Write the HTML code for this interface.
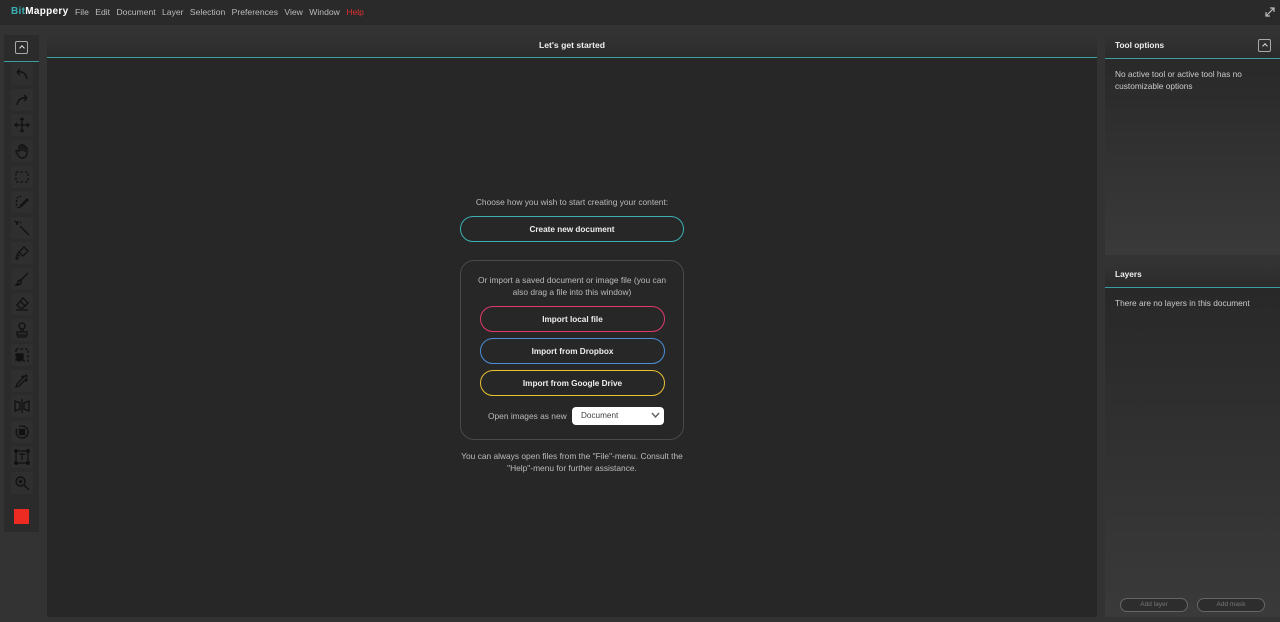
<!DOCTYPE html>
<html><head><meta charset="utf-8"><style>
*{margin:0;padding:0;box-sizing:border-box}
body{width:1280px;height:622px;background:#333;font-family:"Liberation Sans",sans-serif;font-size:8.6px;color:#ccc;position:relative;overflow:hidden}
.top{position:absolute;left:0;top:0;width:1280px;height:25px;background:#2a2a2a}
.logo{position:absolute;left:11px;top:6px;font-weight:bold;font-size:10px;color:#fff;letter-spacing:.3px}
.logo span{color:#3ab0b5}
.menu{position:absolute;left:75px;top:7px;font-size:8.6px;color:#bbb;white-space:nowrap}
.menu b{font-weight:normal;margin-right:6.4px}
.tb{position:absolute;left:4px;top:35px;width:35px;height:497px;background:#2b2b2b}
.tb .hd{height:27px;border-bottom:1px solid #3a9ea3}
.ub{position:absolute;width:13px;height:13px;border:1.5px solid #aaa;border-radius:2px}
.ub:after{content:"";position:absolute;left:3.5px;top:4px;width:3px;height:3px;border-left:1.2px solid #ddd;border-top:1.2px solid #ddd;transform:rotate(45deg)}
.ic{position:absolute;left:7px;width:22px;height:22px;background:#2f2f2f;border-radius:2px}
.ic svg{position:absolute;left:3px;top:3px}
.main{position:absolute;left:47px;top:35px;width:1050px;height:582px;background:#272727}
.mh{height:23px;background:linear-gradient(#333,#2b2b2b);border-bottom:1px solid #3a9ea3;text-align:center;font-weight:bold;color:#eee;font-size:8.6px;line-height:21px}
.c{position:absolute;left:0;width:1050px;text-align:center;color:#bbb;font-size:8.4px;line-height:12px;white-space:nowrap}
.btn{position:absolute;height:26px;border-radius:13px;border:1.5px solid;text-align:center;line-height:25px;font-weight:bold;color:#eee;font-size:8.2px}
.box{position:absolute;left:413px;top:225px;width:224px;height:180px;border:1.5px solid #4a4a4a;border-radius:14px}
.sel{position:absolute;left:525px;top:372px;width:92px;height:18px;background:#fff;border-radius:4px;color:#444;font-size:8.2px;line-height:18px;padding-left:9px}
.rp{position:absolute;left:1105px;width:175px;background:linear-gradient(#272727,#3a3a3a)}
.rh{height:24px;background:linear-gradient(#333,#2b2b2b);border-bottom:1px solid #3a9ea3;font-weight:bold;color:#eee;font-size:8.3px;line-height:21px;padding-left:10px}
.rt{padding:9px 10px;line-height:12px;color:#ccc;font-size:8.3px}
.sm{position:absolute;top:598px;width:68px;height:14px;border:1px solid #666;border-radius:7px;color:#777;font-size:6.5px;text-align:center;line-height:12px;background:#2d2d2d}
</style></head><body>
<div class="top"><div class="logo"><span>Bit</span>Mappery</div>
<div class="menu"><b>File</b><b>Edit</b><b>Document</b><b>Layer</b><b>Selection</b><b>Preferences</b><b>View</b><b>Window</b><b style="color:#e03030">Help</b></div>
<svg style="position:absolute;left:1264px;top:6px" width="12" height="12" viewBox="0 0 12 12" fill="none" stroke="#bbb" stroke-width="1.2"><path d="M2 10L10 2M6 2h4v4M2 6v4h4"/></svg></div>
<div class="tb"><div class="hd"><div class="ub" style="left:11px;top:6px"></div></div>
<div class="ic" style="top:28px"><svg width="16" height="16" viewBox="0 0 16 16" fill="none" stroke="#111" stroke-width="1.4"><path d="M13 13C12 7 8 5 3 6M3 6l3-3M3 6l3 3"/></svg></div>
<div class="ic" style="top:54px"><svg width="16" height="16" viewBox="0 0 16 16" fill="none" stroke="#111" stroke-width="1.4"><path d="M3 13C4 7 8 5 13 6M13 6l-3-3M13 6l-3 3"/></svg></div>
<div class="ic" style="top:79px"><svg width="16" height="16" viewBox="0 0 16 16" fill="none" stroke="#111" stroke-width="1.3"><path d="M8 1v14M1 8h14M6 3l2-2 2 2M6 13l2 2 2-2M3 6L1 8l2 2M13 6l2 2-2 2"/></svg></div>
<div class="ic" style="top:105px"><svg width="16" height="16" viewBox="0 0 16 16" fill="none" stroke="#111" stroke-width="1.3"><path d="M5 9V3.5a1 1 0 012 0V8V2.5a1 1 0 012 0V8V3.5a1 1 0 012 0V9V5.5a1 1 0 012 0V10c0 3-2 5-5 5-2 0-3-1-4-3L2 9a1 1 0 012-1l1 1"/></svg></div>
<div class="ic" style="top:131px"><svg width="16" height="16" viewBox="0 0 16 16" fill="none" stroke="#111" stroke-width="1.3" stroke-dasharray="2.5 2"><rect x="2" y="3" width="12" height="10"/></svg></div>
<div class="ic" style="top:156px"><svg width="16" height="16" viewBox="0 0 16 16" fill="none" stroke="#111" stroke-width="1.3"><path d="M5 14C2 13 2 9 3 5s4-3 5-1" stroke-dasharray="2 1.5"/><path d="M14 6l-6 6-2 1 1-2 6-6z"/></svg></div>
<div class="ic" style="top:182px"><svg width="16" height="16" viewBox="0 0 16 16" fill="none" stroke="#111" stroke-width="1.4"><path d="M6 6l9 9M2 4h2M4 1v2M1 1l2 2M7 2L6 3"/></svg></div>
<div class="ic" style="top:207px"><svg width="16" height="16" viewBox="0 0 16 16" fill="none" stroke="#111" stroke-width="1.3"><path d="M5 7l5-5 4 4-5 5zM5 7l-2 3 3 1M2 13a1 1 0 102 0 1 1 0 00-2 0"/></svg></div>
<div class="ic" style="top:233px"><svg width="16" height="16" viewBox="0 0 16 16" fill="none" stroke="#111" stroke-width="1.4"><path d="M14 2L7 9M7 9c-2 0-3 1-3 3l-2 2c2 0 5 0 5-3z"/></svg></div>
<div class="ic" style="top:258px"><svg width="16" height="16" viewBox="0 0 16 16" fill="none" stroke="#111" stroke-width="1.3"><path d="M9 2l5 5-5 5H6L3 9zM6 5l5 5M2 14h12"/></svg></div>
<div class="ic" style="top:284px"><svg width="16" height="16" viewBox="0 0 16 16" fill="none" stroke="#111" stroke-width="1.3"><circle cx="8" cy="4" r="3"/><path d="M7 7v3M9 7v3M3 10h10v3H3zM3 15h10"/></svg></div>
<div class="ic" style="top:309px"><svg width="16" height="16" viewBox="0 0 16 16" fill="none" stroke="#111" stroke-width="1.3"><rect x="2" y="2" width="12" height="12" stroke-dasharray="2.5 2"/><rect x="3" y="7" width="6" height="6" fill="#111"/></svg></div>
<div class="ic" style="top:335px"><svg width="16" height="16" viewBox="0 0 16 16" fill="none" stroke="#111" stroke-width="1.3"><path d="M13 3l-1-1-2 2-1-1-1 1 1 1-6 6-1 3 3-1 6-6 1 1 1-1-1-1z"/></svg></div>
<div class="ic" style="top:360px"><svg width="16" height="16" viewBox="0 0 16 16" fill="none" stroke="#111" stroke-width="1.3"><path d="M1 3l5 2v6l-5 2zM15 3l-5 2v6l5 2zM8 1v14" /></svg></div>
<div class="ic" style="top:386px"><svg width="16" height="16" viewBox="0 0 16 16" fill="none" stroke="#111" stroke-width="1.3"><path d="M3 5a6 6 0 105-3H5"/><rect x="5.5" y="5.5" width="5" height="5" fill="#111"/></svg></div>
<div class="ic" style="top:411px"><svg width="16" height="16" viewBox="0 0 16 16" fill="none" stroke="#111" stroke-width="1.3"><rect x="2" y="2" width="12" height="12"/><path d="M5 5h6M8 5v6"/><circle cx="2" cy="2" r="1.3" fill="#111"/><circle cx="14" cy="2" r="1.3" fill="#111"/><circle cx="2" cy="14" r="1.3" fill="#111"/><circle cx="14" cy="14" r="1.3" fill="#111"/></svg></div>
<div class="ic" style="top:437px"><svg width="16" height="16" viewBox="0 0 16 16" fill="none" stroke="#111" stroke-width="1.4"><circle cx="6.5" cy="6.5" r="4.5"/><path d="M10 10l5 5M4.5 6.5h4M6.5 4.5v4"/></svg></div>
<div style="position:absolute;left:10px;top:474px;width:15px;height:15px;background:#ee2b22"></div>
</div>
<div class="main"><div class="mh">Let's get started</div>
<div class="c" style="top:161px">Choose how you wish to start creating your content:</div>
<div class="btn" style="left:413px;top:181px;width:224px;border-color:#3ab0b5">Create new document</div>
<div class="box"></div>
<div class="c" style="top:239px">Or import a saved document or image file (you can<br>also drag a file into this window)</div>
<div class="btn" style="left:433px;top:271px;width:185px;border-color:#e0396a">Import local file</div>
<div class="btn" style="left:433px;top:303px;width:185px;border-color:#4a8fd8">Import from Dropbox</div>
<div class="btn" style="left:433px;top:335px;width:185px;border-color:#e8c030">Import from Google Drive</div>
<div class="c" style="top:375px;left:441px;width:80px;text-align:left">Open images as new</div>
<div class="sel">Document<svg style="position:absolute;right:4px;top:5px" width="9" height="7" viewBox="0 0 9 7" fill="none" stroke="#666" stroke-width="1.5"><path d="M1 1l3.5 4L8 1"/></svg></div>
<div class="c" style="top:415px">You can always open files from the "File"-menu. Consult the<br>"Help"-menu for further assistance.</div>
</div>
<div class="rp" style="top:35px;height:220px"><div class="rh">Tool options</div><div class="ub" style="left:153px;top:4px"></div>
<div class="rt">No active tool or active tool has no<br>customizable options</div></div>
<div class="rp" style="top:264px;height:353px"><div class="rh">Layers</div>
<div class="rt">There are no layers in this document</div></div>
<div class="sm" style="left:1120px">Add layer</div>
<div class="sm" style="left:1197px">Add mask</div>
</body></html>
